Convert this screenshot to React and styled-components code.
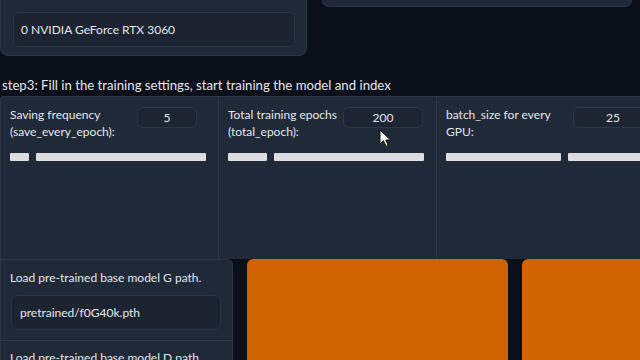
import React from "react";
import styled, { createGlobalStyle } from "styled-components";

const GlobalStyle = createGlobalStyle`
  html, body {
    margin: 0;
    padding: 0;
    background: #0b0f19;
  }
  body {
    font-family: "Lato", "Noto Sans", sans-serif;
    color: #e5e7eb;
  }
`;

const settings = [
  { label: ["Saving frequency", "(save_every_epoch):"], value: "5", labelW: 117, inputW: 60, knob: 19 },
  { label: ["Total training epochs", "(total_epoch):"], value: "200", labelW: 105, inputW: 80, knob: 39 },
  { label: ["batch_size for every", "GPU:"], value: "25", labelW: 117, inputW: 80, knob: 115 },
];

const App = () => {
  return (
    <Page>
      <GlobalStyle />
      <TopRow>
        <GpuPanel>
          <TextBox>0 NVIDIA GeForce RTX 3060</TextBox>
        </GpuPanel>
        <StubPanel />
      </TopRow>

      <StepTitle>step3: Fill in the training settings, start training the model and index</StepTitle>

      <SettingsRow>
        {settings.map((s, i) => (
          <SettingCol key={i} $first={i === 0}>
            <SettingHead $labelW={s.labelW} $inputW={s.inputW}>
              <SettingLabel>
                {s.label[0]}
                <br />
                {s.label[1]}
              </SettingLabel>
              <NumberBox>{s.value}</NumberBox>
            </SettingHead>
            <Slider>
              <SliderPart style={{ width: s.knob }} />
              <SliderPart $grow />
            </Slider>
          </SettingCol>
        ))}
      </SettingsRow>

      <BottomRow>
        <PathPanel>
          <PathLabel>Load pre-trained base model G path.</PathLabel>
          <PathBox>pretrained/f0G40k.pth</PathBox>
          <Divider />
          <PathLabel>Load pre-trained base model D path.</PathLabel>
        </PathPanel>
        <OrangeButton />
        <OrangeButton />
      </BottomRow>

      <Cursor width="14" height="20" viewBox="0 0 14 20">
        <path d="M1 1 L1 15 L4.5 11.8 L7 17.5 L9.2 16.5 L6.8 11 L11.5 11 Z" fill="#ffffff" stroke="#111" strokeWidth="1" strokeLinejoin="round" />
      </Cursor>
    </Page>
  );
};

const Page = styled.div`
  position: relative;
  width: 640px;
  height: 360px;
  overflow: hidden;
  background: #0b0f19;
`;

const TopRow = styled.div`
  display: flex;
  align-items: flex-start;
  gap: 15px;
  height: 56px;
`;

const GpuPanel = styled.div`
  box-sizing: border-box;
  width: 307px;
  height: 56px;
  padding: 12px 11px 0 12px;
  background: #1f2937;
  border: 1px solid #2b3545;
  border-top: none;
  border-radius: 0 0 8px 8px;
`;

const StubPanel = styled.div`
  width: 308px;
  height: 6px;
  background: #1f2937;
  border: 1px solid #2b3545;
  border-top: none;
  border-radius: 0 0 8px 8px;
`;

const TextBox = styled.div`
  box-sizing: border-box;
  height: 35px;
  display: flex;
  align-items: center;
  padding: 0 7px;
  background: #1c2432;
  border: 1px solid #2a3444;
  border-radius: 6px;
  font-size: 12px;
  color: #e5e7eb;
`;

const StepTitle = styled.div`
  margin: 20px 0 0 2px;
  height: 20px;
  line-height: 18px;
  font-size: 13.2px;
  color: #e5e7eb;
`;

const SettingsRow = styled.div`
  display: grid;
  grid-template-columns: 217px 218px 218px;
  width: 654px;
  height: 162px;
  background: #1f2937;
  border-top: 1px solid #2b3545;
  border-left: 1px solid #2b3545;
  border-radius: 4px 0 0 0;
`;

const SettingCol = styled.div`
  box-sizing: border-box;
  padding: 9px 0 0 9px;
  border-left: ${(p) => (p.$first ? "none" : "1px solid #2e3848")};
`;

const SettingHead = styled.div`
  display: grid;
  grid-template-columns: ${(p) => p.$labelW}px ${(p) => p.$inputW}px;
  column-gap: 10px;
  align-items: start;
  height: 47px;
`;

const SettingLabel = styled.div`
  font-size: 12px;
  line-height: 17px;
  color: #e5e7eb;
  white-space: nowrap;
`;

const NumberBox = styled.div`
  box-sizing: border-box;
  height: 21px;
  margin-top: 1px;
  display: flex;
  align-items: center;
  justify-content: center;
  border: 1px solid #2c3646;
  border-radius: 6px;
  background: #1d2533;
  font-size: 12px;
  color: #e5e7eb;
`;

const Slider = styled.div`
  display: flex;
  gap: 7px;
  width: 196px;
  height: 8px;
`;

const SliderPart = styled.div`
  flex: ${(p) => (p.$grow ? 1 : "none")};
  height: 8px;
  background: #dcdde0;
  border-radius: 1px;
`;

const BottomRow = styled.div`
  display: grid;
  grid-template-columns: 233px 261px 140px;
  column-gap: 14px;
  height: 102px;
`;

const PathPanel = styled.div`
  box-sizing: border-box;
  padding: 10px 11px 0 9px;
  background: #1f2937;
  border: 1px solid #2b3545;
  border-bottom: none;
  border-radius: 0 6px 0 0;
`;

const PathLabel = styled.div`
  font-size: 12px;
  line-height: 16px;
  color: #e5e7eb;
  white-space: nowrap;
`;

const PathBox = styled.div`
  box-sizing: border-box;
  height: 35px;
  margin: 9px 0 0 1px;
  display: flex;
  align-items: center;
  padding: 0 8px;
  background: #1c2432;
  border: 1px solid #2a3444;
  border-radius: 6px;
  font-size: 12px;
  color: #e5e7eb;
`;

const Divider = styled.div`
  height: 1px;
  margin: 10px -11px 9px -9px;
  background: #2e3848;
`;

const OrangeButton = styled.div`
  background: #cf6300;
  border-radius: 6px 6px 0 0;
`;

const Cursor = styled.svg`
  position: absolute;
  left: 379px;
  top: 129px;
`;

export default App;
